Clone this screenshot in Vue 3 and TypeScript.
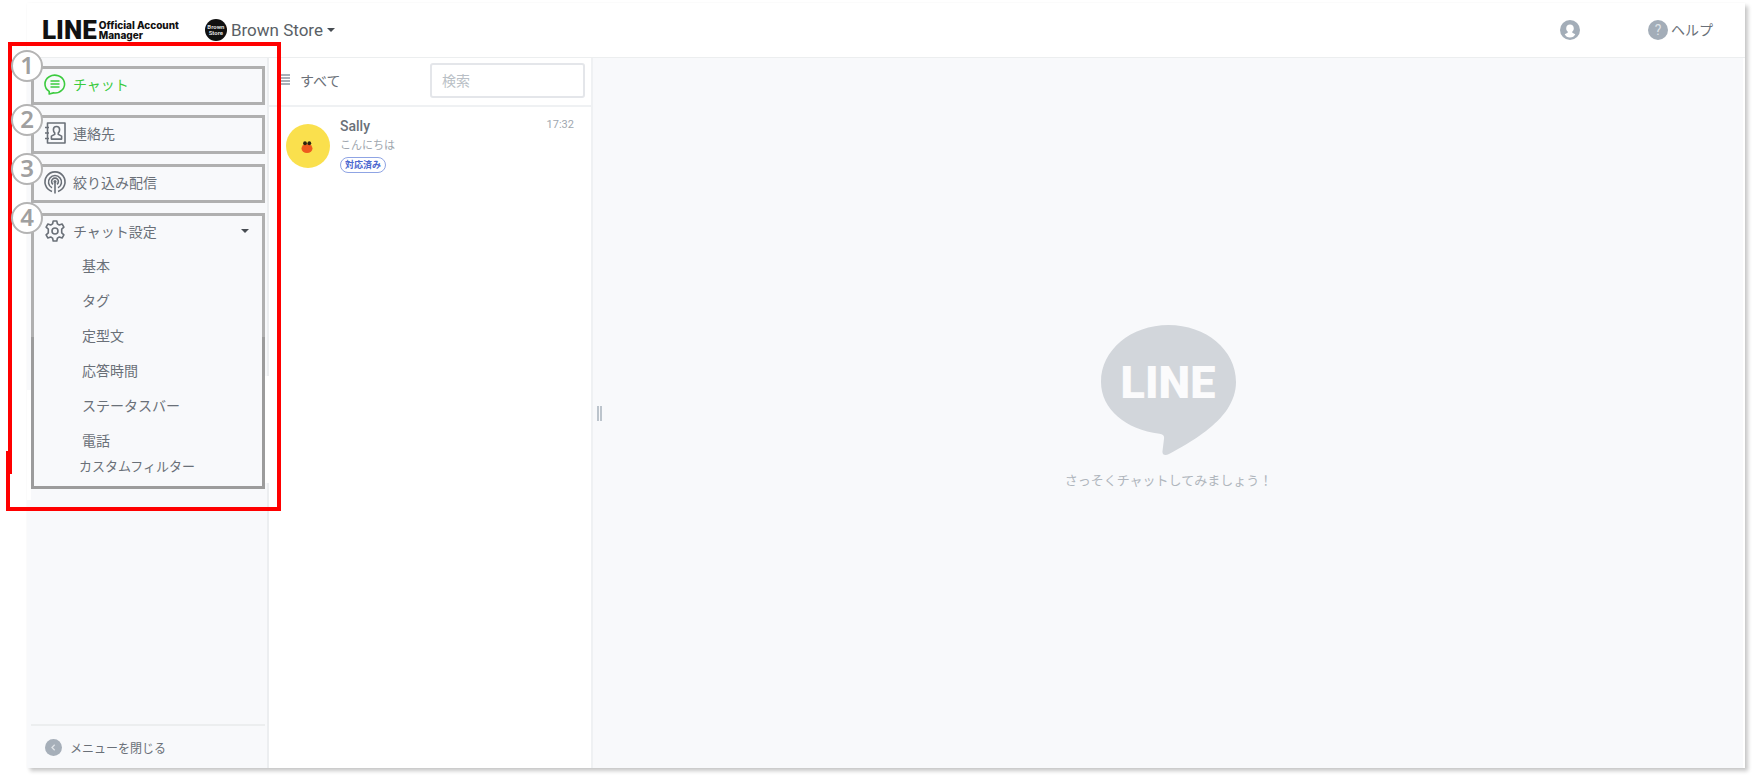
<script setup lang="ts">
import { ref } from 'vue'

interface Entry {
  id: string
  label: string
}

interface Conversation {
  name: string
  message: string
  status: string
  time: string
}

const entries: Entry[] = [
  { id: 'chat', label: 'チャット' },
  { id: 'contacts', label: '連絡先' },
  { id: 'broadcast', label: '絞り込み配信' },
]

const settings: string[] = ['基本', 'タグ', '定型文', '応答時間', 'ステータスバー', '電話', 'カスタムフィルター']

const conversations: Conversation[] = [
  { name: 'Sally', message: 'こんにちは', status: '対応済み', time: '17:32' },
]

const active = ref('chat')
const settingsOpen = ref(true)
const query = ref('')
</script>

<template>
  <div class="page">
    <div class="window">
      <header class="topbar">
        <a class="brand" href="#">
          <span class="brand-line">LINE</span>
          <span class="brand-sub">Official Account<br />Manager</span>
        </a>
        <button class="store" type="button">
          <span class="store-logo">Brown<br />Store</span>
          <span>Brown Store</span>
          <span class="caret"></span>
        </button>
        <div class="tools">
          <button class="plain" type="button" aria-label="アカウント">
            <svg width="20" height="20" viewBox="0 0 20 20">
              <circle cx="10" cy="10" r="10" fill="#a3adb8" />
              <path d="M10 4.600c2.300 0 3.800 1.600 3.800 3.800 0 1.400-.6 2.500-1.500 3.200v1.200l3 1.500c-.8 2-3 3.300-5.300 3.300s-4.500-1.300-5.300-3.300l3-1.500v-1.200c-.9-.7-1.500-1.800-1.500-3.200 0-2.200 1.500-3.800 3.800-3.800z" fill="#fff" />
            </svg>
          </button>
          <a class="help" href="#">
            <span class="help-mark">?</span>
            <span class="help-label">ヘルプ</span>
          </a>
        </div>
      </header>

      <div class="body">
        <aside class="sidebar">
          <nav class="menu">
            <div v-for="(entry, i) in entries" :key="entry.id" class="box">
              <a class="entry" :class="{ active: active === entry.id }" href="#" @click.prevent="active = entry.id">
                <svg v-if="entry.id === 'chat'" class="icon" viewBox="0 0 22 22">
                  <path d="M5.200 21v-2.600A9.800 8.900 0 1 1 9.500 19.900L5.200 21z" />
                  <path d="M6.500 8h9M6.500 11h9M6.500 14h9" />
                </svg>
                <svg v-else-if="entry.id === 'contacts'" class="icon" viewBox="0 0 22 22">
                  <path d="M3.500 1h17.500v20h-17.500zM1 5.500h4M1 11h4M1 16.500h4" />
                  <path d="M12.500 4.500c2 0 3.100 1.400 3.100 3.200 0 1.400-.5 2.500-1.300 3.200v1.500l3.300 1.700v3h-10.200v-3l3.300-1.700v-1.500c-.8-.7-1.300-1.800-1.300-3.200 0-1.800 1.100-3.200 3.100-3.200z" />
                </svg>
                <svg v-else class="icon" viewBox="0 0 22 22">
                  <path d="M8 20.400a10 10 0 1 1 6 0M8 16.800a6.500 6.500 0 1 1 6 0M9 13.300a3.400 3.400 0 1 1 4 0M11 10.500v12" />
                  <circle cx="11" cy="10.500" r="1.500" class="dot" />
                </svg>
                <span>{{ entry.label }}</span>
              </a>
              <span class="step">{{ i + 1 }}</span>
            </div>
            <div class="box settings">
              <button class="entry" type="button" :aria-expanded="settingsOpen" @click="settingsOpen = !settingsOpen">
                <svg class="icon" viewBox="0 0 22 22">
                  <path d="M9.200 1h3.600l.6 2.900 1.900 1.100 2.800-1 1.800 3.100-2.200 2v3.800l2.200 2-1.800 3.100-2.800-1-1.900 1.100-.6 2.900h-3.600l-.6-2.900-1.900-1.100-2.800 1-1.800-3.100 2.200-2v-3.800l-2.200-2 1.800-3.100 2.800 1 1.900-1.100z" />
                  <circle cx="11" cy="11" r="3" />
                </svg>
                <span>チャット設定</span>
                <span class="caret end"></span>
              </button>
              <ul v-show="settingsOpen" class="sub">
                <li v-for="item in settings" :key="item"><a href="#">{{ item }}</a></li>
              </ul>
              <span class="step">4</span>
            </div>
            <div class="frame"></div>
            <div class="frame-foot"></div>
          </nav>
          <button class="collapse" type="button">
            <svg width="17" height="17" viewBox="0 0 17 17">
              <circle cx="8.500" cy="8.500" r="8.500" fill="#a6afb9" />
              <path d="M9.700 5.800L7 8.500l2.700 2.700" fill="none" stroke="#dfe3e7" stroke-width="1.300" />
            </svg>
            <span>メニューを閉じる</span>
          </button>
        </aside>

        <section class="list">
          <div class="filter">
            <button class="filter-all" type="button">
              <svg width="11" height="11" viewBox="0 0 11 11">
                <path d="M0 1h11M0 4h11M0 7h11M0 10h11" stroke="#8d96a1" stroke-width="1.300" />
              </svg>
              <span>すべて</span>
            </button>
            <input v-model="query" class="search" type="text" placeholder="検索" aria-label="検索" />
          </div>
          <a v-for="c in conversations" :key="c.name" class="conversation" href="#">
            <svg class="avatar" viewBox="0 0 44 44">
              <circle cx="22" cy="22" r="22" fill="#fae04d" />
              <ellipse cx="21" cy="24.500" rx="5.500" ry="4.600" fill="#ee5a1e" />
              <ellipse cx="19" cy="19.200" rx="1.900" ry="2" fill="#2b2410" />
              <ellipse cx="23.300" cy="19.200" rx="1.900" ry="2" fill="#2b2410" />
            </svg>
            <span class="summary">
              <span class="name">{{ c.name }}</span>
              <span class="message">{{ c.message }}</span>
              <span class="status">{{ c.status }}</span>
            </span>
            <time class="time">{{ c.time }}</time>
          </a>
        </section>

        <main class="pane">
          <div class="handle" role="separator" aria-orientation="vertical"></div>
          <div class="empty">
            <svg class="bubble" viewBox="0 0 135 130">
              <path d="M67.500 0C105 0 135 25 135 57c0 20-13 36-30 49-13 10-26 17-37 23-4 2-7 1-6.500-3l1.500-12c.5-3.500-1-5-4.500-5.300C25 105 0 84 0 57 0 25 30 0 67.500 0z" fill="#d2d6db" />
              <text x="67" y="73" text-anchor="middle">LINE</text>
            </svg>
            <p>さっそくチャットしてみましょう！</p>
          </div>
        </main>
      </div>
    </div>
  </div>
</template>

<style>
body {
  margin: 0;
  background: #fff;
}
</style>

<style scoped>
* {
  box-sizing: border-box;
}

.page {
  display: flex;
  min-height: 100vh;
  padding: 3px 12px 12px 27px;
  font-family: Roboto, 'Noto Sans CJK JP', sans-serif;
  font-size: 14px;
  color: #6a7078;
}

.window {
  display: flex;
  flex: 1;
  flex-direction: column;
  min-width: 0;
  background: #fff;
  box-shadow: 3px 3px 4px rgba(0, 0, 0, 0.22), 0 0 2px rgba(0, 0, 0, 0.03);
}

a {
  color: inherit;
  text-decoration: none;
}

button {
  padding: 0;
  border: 0;
  background: none;
  color: inherit;
  font: inherit;
  cursor: pointer;
}

.topbar {
  display: flex;
  align-items: center;
  height: 55px;
  padding: 0 32px 0 15px;
  border-bottom: 1px solid #eceeef;
}

.brand {
  display: flex;
  align-items: center;
  gap: 2px;
  padding-bottom: 1px;
  color: #111;
}

.brand-line {
  font-size: 26px;
  font-weight: 900;
  line-height: 26px;
}

.brand-sub {
  font-family: Inter, sans-serif;
  font-size: 10px;
  font-weight: 800;
  line-height: 10px;
}

.store {
  display: flex;
  align-items: center;
  gap: 4px;
  margin-left: 26px;
  color: #5a5f66;
  font-size: 17px;
}

.store-logo {
  display: grid;
  place-content: center;
  width: 22px;
  height: 22px;
  border-radius: 50%;
  background: #111;
  color: #ddd;
  font-size: 6px;
  font-weight: 700;
  line-height: 6px;
}

.caret {
  border: 4px solid transparent;
  border-top-color: #474c52;
  border-bottom: 0;
}

.caret.end {
  margin: 0 13px 0 auto;
}

.tools {
  display: flex;
  align-items: center;
  gap: 68px;
  margin-left: auto;
}

.plain {
  display: flex;
}

.help {
  display: flex;
  align-items: center;
  gap: 3px;
}

.help-mark {
  width: 20px;
  border-radius: 50%;
  background: #a3adb8;
  color: #dfe3e7;
  font-size: 14px;
  line-height: 20px;
  text-align: center;
}

.help-label {
  padding-bottom: 3px;
}

.body {
  display: flex;
  flex: 1;
}

.sidebar {
  display: flex;
  flex: none;
  flex-direction: column;
  justify-content: space-between;
  width: 242px;
  padding: 8px 2px 0 4px;
  border-right: 2px solid #eceef0;
  background: #f8f9fb;
}

.menu {
  position: relative;
  display: flex;
  flex-direction: column;
  gap: 10px;
}

.box {
  position: relative;
  border: 3px solid #b0b0b0;
}

.settings {
  padding-bottom: 11px;
  border-image: linear-gradient(#b0b0b0 45%, #9c9c9c 45%) 3;
}

/* White margins beside the lower half of the settings box */
.settings::before,
.settings::after {
  position: absolute;
  background: #fff;
  content: '';
}

.settings::before {
  top: 174px;
  bottom: -14px;
  left: -7px;
  width: 4px;
}

.settings::after {
  top: 160px;
  right: -14px;
  bottom: 3px;
  width: 11px;
}

.entry {
  display: flex;
  align-items: center;
  gap: 7px;
  width: 100%;
  height: 33px;
  padding: 0 0 3px 10px;
  text-align: left;
}

.entry.active {
  color: #3ccb3f;
}

.icon {
  flex: none;
  width: 22px;
  height: 22px;
  overflow: visible;
  fill: none;
  stroke: currentColor;
  stroke-width: 1.600;
  stroke-linejoin: round;
}

.dot {
  fill: currentColor;
  stroke: none;
}

.step {
  position: absolute;
  top: -14px;
  left: -23px;
  z-index: 2;
  width: 32px;
  height: 32px;
  border: 2px solid #b4b4b4;
  border-radius: 50%;
  background: #fff;
  color: #a0a0a0;
  font-family: 'Noto Sans', sans-serif;
  font-size: 24px;
  font-weight: 600;
  line-height: 25px;
  text-align: center;
}

.box:first-child .step {
  top: -19px;
}

.sub {
  margin: 0;
  padding: 0 0 0 48px;
  list-style: none;
  line-height: 35px;
}

.sub li:last-child {
  margin-left: -3px;
  font-size: 13px;
  line-height: 16px;
}

.frame {
  position: absolute;
  inset: -24px -16px 15px -23px;
  border: 4px solid #f00;
  border-bottom: 0;
  pointer-events: none;
}

.frame-foot {
  position: absolute;
  right: -16px;
  bottom: -22px;
  left: -25px;
  height: 60px;
  border: 4px solid #f00;
  border-top: 0;
  pointer-events: none;
}

.collapse {
  display: flex;
  align-items: center;
  gap: 8px;
  height: 44px;
  padding-left: 14px;
  border-top: 2px solid #eceeef;
  font-size: 12px;
}

.list {
  flex: none;
  width: 324px;
  border-right: 2px solid #eff1f3;
}

.filter {
  display: flex;
  align-items: center;
  justify-content: space-between;
  height: 49px;
  padding: 0 6px 2px 10px;
  border-bottom: 2px solid #eff1f3;
}

.filter-all {
  display: flex;
  align-items: center;
  gap: 10px;
  padding-bottom: 2px;
}

.search {
  width: 155px;
  height: 35px;
  padding: 0 10px;
  border: 2px solid #e4e6ea;
  border-radius: 3px;
  color: inherit;
  font: inherit;
}

.search::placeholder {
  color: #b9bfc6;
  opacity: 1;
}

.conversation {
  display: flex;
  gap: 10px;
  padding: 9px 17px 0;
}

.avatar {
  width: 44px;
  height: 44px;
  margin-top: 8px;
}

.summary {
  display: flex;
  flex: 1;
  flex-direction: column;
  align-items: flex-start;
}

.name {
  font-weight: 500;
  line-height: 20px;
}

.message {
  color: #a0a7af;
  font-size: 11px;
  line-height: 20px;
}

.status {
  margin-top: 1px;
  padding: 0 4px;
  border: 1px solid #8fa4e4;
  border-radius: 8px;
  color: #4c68cf;
  font-size: 9px;
  font-weight: 700;
  line-height: 14px;
}

.time {
  color: #a0a7af;
  font-size: 11px;
  line-height: 18px;
}

.pane {
  display: flex;
  flex: 1;
  align-items: center;
  margin-right: 2px;
  background: #f8f9fb;
}

.handle {
  width: 5px;
  height: 15px;
  margin-left: 4px;
  border: solid #bcc4cc;
  border-width: 0 2px;
}

.empty {
  flex: 1;
  margin-right: 8px;
  text-align: center;
}

.bubble {
  width: 135px;
  height: 130px;
}

.bubble text {
  fill: #fbfbfc;
  font-size: 45px;
  font-weight: 900;
}

.empty p {
  margin: 13px 0 11px;
  color: #b0b6bd;
  font-size: 13px;
  line-height: 20px;
}
</style>
